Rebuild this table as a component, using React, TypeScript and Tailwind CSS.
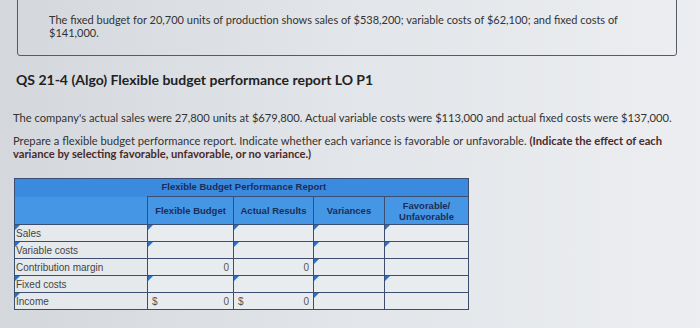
const rows = [
  { label: 'Sales', inputs: true, dollar: false, zero: false },
  { label: 'Variable costs', inputs: true, dollar: false, zero: false },
  { label: 'Contribution margin', inputs: false, dollar: false, zero: true },
  { label: 'Fixed costs', inputs: true, dollar: false, zero: false },
  { label: 'Income', inputs: false, dollar: true, zero: true },
]

function Marker() {
  return (
    <span className="absolute left-0 top-0 w-0 h-0 border-t-[5px] border-t-[#2a6fc9] border-r-[5px] border-r-transparent" />
  )
}

function Cell({ marker, dollar, zero }: { marker?: boolean; dollar?: boolean; zero?: boolean }) {
  return (
    <td className="relative h-[17px] border border-[#3d4d70] bg-[#e9ecef] px-1 text-[10px] text-[#555]">
      {marker && <Marker />}
      <div className="flex justify-between">
        <span>{dollar ? '$' : ''}</span>
        <span>{zero ? '0' : ''}</span>
      </div>
    </td>
  )
}

export default function App() {
  return (
    <div className="w-[700px] h-[328px] overflow-hidden bg-gradient-to-r from-[#d4d8dd] via-[#e2e5e9] to-[#eceef1] font-['Lato',sans-serif] text-[#2b2b2b]">
      <div className="ml-[17px] mr-[23px] mt-[-6px] h-[62px] rounded-[3px] border border-[#555c66] pl-[31px] pt-[18px] text-[11px] leading-[13px] text-[#333]">
        The fixed budget for 20,700 units of production shows sales of $538,200; variable costs of $62,100; and fixed costs of
        <br />
        $141,000.
      </div>

      <h1 className="ml-[16px] mt-[15px] text-[14px] font-bold leading-[17px] text-[#222]">
        QS 21-4 (Algo) Flexible budget performance report LO P1
      </h1>

      <p className="ml-[13px] mt-[23px] text-[11.2px] leading-[13px] text-[#333]">
        The company's actual sales were 27,800 units at $679,800. Actual variable costs were $113,000 and actual fixed costs were $137,000.
      </p>

      <p className="ml-[13px] mt-[10px] w-[668px] text-[11.2px] leading-[13px] text-[#333]">
        Prepare a flexible budget performance report. Indicate whether each variance is favorable or unfavorable.{' '}
        <span className="font-bold text-[#4a2a2a]">
          (Indicate the effect of each variance by selecting favorable, unfavorable, or no variance.)
        </span>
      </p>

      <table className="ml-[14px] mt-[18px] border-collapse font-['Liberation_Sans',Arial,sans-serif]">
        <colgroup>
          <col className="w-[133px]" />
          <col className="w-[86px]" />
          <col className="w-[80px]" />
          <col className="w-[71px]" />
          <col className="w-[84px]" />
        </colgroup>
        <thead>
          <tr className="h-[18px] bg-[#3a8ae0]">
            <th className="border-t border-l border-[#3d4d70]" />
            <th colSpan={3} className="border-t border-[#3d4d70] pl-[14px] text-left text-[9.5px] font-bold text-[#1c2d55]">
              Flexible Budget Performance Report
            </th>
            <th className="border-t border-r border-[#3d4d70]" />
          </tr>
          <tr className="h-[28px] bg-[#4597e6] text-[9.5px] font-bold leading-[11px] text-[#1c2d55]">
            <th className="border-l border-b border-[#3d4d70]" />
            <th className="border border-[#3d4d70] font-bold">Flexible Budget</th>
            <th className="border border-[#3d4d70] font-bold">Actual Results</th>
            <th className="border border-[#3d4d70] font-bold">Variances</th>
            <th className="border border-[#3d4d70] font-bold">
              Favorable/
              <br />
              Unfavorable
            </th>
          </tr>
        </thead>
        <tbody>
          {rows.map((r) => (
            <tr key={r.label}>
              <td className="relative h-[17px] border border-[#3d4d70] bg-[#e6e9ec] pl-[1px] text-[10px] leading-[15px] text-[#444]">
                {r.label !== 'Contribution margin' && <Marker />}
                {r.label}
              </td>
              <Cell marker={r.inputs} dollar={r.dollar} zero={r.zero} />
              <Cell marker={r.inputs} dollar={r.dollar} zero={r.zero} />
              <Cell marker />
              <Cell marker={r.inputs} />
            </tr>
          ))}
        </tbody>
      </table>
    </div>
  )
}
